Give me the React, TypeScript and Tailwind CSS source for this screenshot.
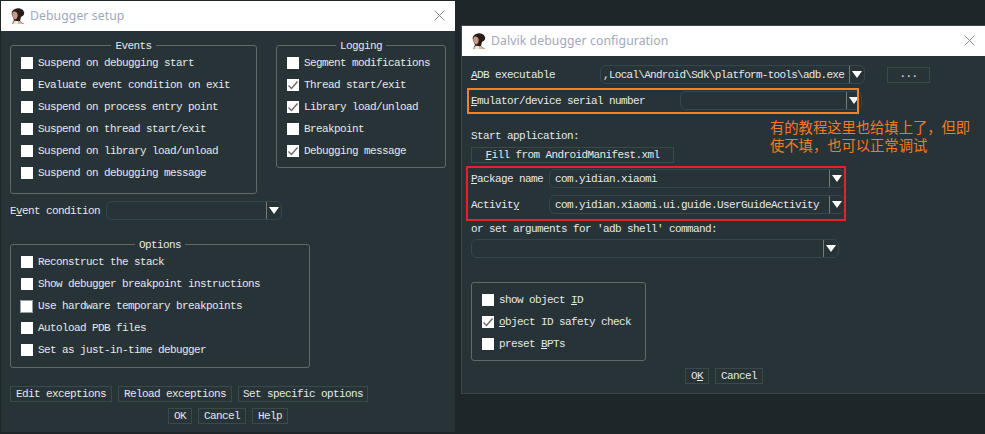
import type { ReactNode } from "react";

function Face() {
  return (
    <svg width="17" height="17" viewBox="0 0 17 17" className="shrink-0">
      <path d="M6 1 C9 -0.5 14 0.5 15 4 C16 7 13 8 12 9 L11 13 L15 16 L3 16 L5 12 L3 7 C2 4 3.5 2 6 1 Z" fill="#2a1c18" />
      <path d="M4 4 C6 3 8 4 8.5 6 C9 8 8 11 6.5 11.5 C5 11.5 3.5 9 3.3 7 C3.2 5.5 3.4 4.5 4 4 Z" fill="#c99a85" />
      <path d="M3 16 L5.5 12.5 L8 13.5 L11 13 L14.5 16 Z" fill="#d8b8a6" />
      <path d="M6 13 L9 13 L9 16 L5 16 Z" fill="#f2e6de" />
    </svg>
  );
}

function Check({ label, checked, focus }: { label: ReactNode; checked?: boolean; focus?: boolean }) {
  return (
    <div className="flex h-[22px] items-center gap-[5px]">
      <span
        className={`flex items-center justify-center bg-white ${
          focus ? "ml-[-1px] h-[13px] w-[13px] border border-[#9aa0a2]" : "h-[12px] w-[12px]"
        }`}
      >
        {checked && (
          <svg width="12" height="12" viewBox="0 0 12 12">
            <path d="M1.5 6.5 L4.5 9.5 L10.5 2.5" fill="none" stroke="#6a6a6a" strokeWidth="1.4" />
          </svg>
        )}
      </span>
      <span>{label}</span>
    </div>
  );
}

function Combo({ width, sep, text, className = "" }: { width: string; sep: string; text?: string; className?: string }) {
  return (
    <div className={`flex h-[19px] items-center overflow-hidden rounded-[6px] border border-[#36474b] ${width} ${className}`}>
      <div className={`h-full overflow-hidden whitespace-pre leading-[19px] ${sep}`}>{text}</div>
      <div className="flex h-full flex-1 items-center justify-center border-l border-[#737c7f]">
        <svg width="10" height="7" viewBox="0 0 10 7">
          <path d="M0 0 H10 L5 7 Z" fill="#ffffff" />
        </svg>
      </div>
    </div>
  );
}

function Btn({ children, width }: { children: ReactNode; width: string }) {
  return (
    <div className={`flex h-[16px] items-center justify-center border border-[#3a4a4b] leading-none ${width}`}>{children}</div>
  );
}

function Group({ title, size, children }: { title?: string; size: string; children: ReactNode }) {
  return (
    <div className={`relative rounded-[3px] border border-[#62696c] pl-[10px] pt-[6px] ${size}`}>
      {title && (
        <div className="absolute left-0 right-0 top-[-6px] flex justify-center leading-[12px]">
          <span className="bg-[#283338] px-[4px]">{title}</span>
        </div>
      )}
      {children}
    </div>
  );
}

function TitleBar({ title }: { title: string }) {
  return (
    <div className="flex h-[30px] items-center bg-white pl-[8px] pr-[10px] font-['Noto_Sans',sans-serif] text-[12.2px] tracking-[0.1px] text-[#a0a8ba]">
      <Face />
      <span className="ml-[4px] flex-1">{title}</span>
      <svg width="11" height="11" viewBox="0 0 11 11" className="mb-[2px]">
        <path d="M0.5 0.5 L10.5 10.5 M10.5 0.5 L0.5 10.5" stroke="#8a8a8a" strokeWidth="1" />
      </svg>
    </div>
  );
}

export default function App() {
  const mono = "font-['Liberation_Mono',monospace] text-[11px] tracking-[-0.6px] text-[#e4e9e9]";
  return (
    <div className="relative h-[434px] w-[985px] overflow-hidden bg-[#1e2629]">
      {/* left window */}
      <div className={`absolute left-[1px] top-[1px] h-[431px] w-[454px] bg-[#283338] ${mono}`}>
        <TitleBar title="Debugger setup" />
        <div className="pl-[9px]">
          <div className="mt-[14px] flex items-start gap-[19px]">
            <Group title="Events" size="h-[149px] w-[247px]">
              <Check label="Suspend on debugging start" />
              <Check label="Evaluate event condition on exit" />
              <Check label="Suspend on process entry point" />
              <Check label="Suspend on thread start/exit" />
              <Check label="Suspend on library load/unload" />
              <Check label="Suspend on debugging message" />
            </Group>
            <Group title="Logging" size="h-[123px] w-[170px]">
              <Check label="Segment modifications" />
              <Check label="Thread start/exit" checked />
              <Check label="Library load/unload" checked />
              <Check label="Breakpoint" />
              <Check label="Debugging message" checked />
            </Group>
          </div>
          <div className="mt-[7px] flex items-center">
            <span className="w-[96px] pt-[2px]">
              E<u>v</u>ent condition
            </span>
            <Combo width="w-[176px]" sep="w-[159px]" />
          </div>
          <div className="mt-[24px]">
            <Group title="Options" size="h-[124px] w-[300px]">
              <Check label="Reconstruct the stack" />
              <Check label="Show debugger breakpoint instructions" />
              <Check label="Use hardware temporary breakpoints" focus />
              <Check label="Autoload PDB files" />
              <Check label="Set as just-in-time debugger" />
            </Group>
          </div>
          <div className="mt-[18px] flex gap-[6px]">
            <Btn width="w-[102px]">Edit exceptions</Btn>
            <Btn width="w-[114px]">Reload exceptions</Btn>
            <Btn width="w-[130px]">Set specific options</Btn>
          </div>
          <div className="mt-[6px] flex gap-[6px] pl-[158px]">
            <Btn width="w-[24px]">OK</Btn>
            <Btn width="w-[48px]">Cancel</Btn>
            <Btn width="w-[36px]">Help</Btn>
          </div>
        </div>
      </div>

      {/* right window */}
      <div className={`absolute left-[461px] top-[25px] h-[369px] w-[524px] border-b border-l border-t border-[#3a4a4b] bg-[#283338] ${mono}`}>
        <TitleBar title="Dalvik debugger configuration" />
        <div className="pl-[9px]">
          <div className="mt-[9px] flex items-center">
            <span className="w-[129px] pt-[2px]">
              <u>A</u>DB executable
            </span>
            <Combo
              width="w-[265px]"
              sep="w-[248px] pl-[2px] tracking-[-0.72px]"
              text=",Local\Android\Sdk\platform-tools\adb.exe"
            />
            <div className="ml-[22px]">
              <Btn width="w-[43px]">...</Btn>
            </div>
          </div>

          <div className="relative mt-[7px] flex items-center">
            <span className="w-[209px] pt-[2px]">
              <u>E</u>mulator/device serial number
            </span>
            <Combo width="w-[182px]" sep="w-[165px]" />
            {/* annotations */}
            <div className="absolute left-[-4px] top-[-3px] h-[26px] w-[392px] border-2 border-[#f58220]" />
            <div className="absolute left-[299px] top-[27px] font-['Noto_Sans_CJK_SC',sans-serif] text-[14.3px] leading-[18px] tracking-normal text-[#f47a20]">
              有的教程这里也给填上了，但即
              <br />
              使不填，也可以正常调试
            </div>
          </div>

          <div className="mt-[17px] h-[16px] w-fit leading-[18px]">Start application:</div>
          <div className="mt-[4px]">
            <Btn width="w-[203px]">
              <span>
                <u>F</u>ill from AndroidManifest.xml
              </span>
            </Btn>
          </div>

          <div className="relative mt-[6px]">
            <div className="flex items-center">
              <span className="w-[78px] pt-[2px]">
                <u>P</u>ackage name
              </span>
              <Combo width="w-[296px]" sep="w-[279px] pl-[5px]" text="com.yidian.xiaomi" />
            </div>
            <div className="mt-[7px] flex items-center">
              <span className="w-[78px] pt-[2px]">
                Activit<u>y</u>
              </span>
              <Combo width="w-[296px]" sep="w-[279px] pl-[5px]" text="com.yidian.xiaomi.ui.guide.UserGuideActivity" />
            </div>
            <div className="absolute left-[-5px] top-[-3px] h-[55px] w-[380px] border-2 border-[#e8202a]" />
          </div>

          <div className="mt-[6px] h-[16px] leading-[18px]">or set arguments for 'adb shell' command:</div>
          <Combo width="w-[368px]" sep="w-[351px]" className="mt-[3px]" />

          <div className="mt-[24px]">
            <Group size="h-[79px] w-[175px]">
              <Check label={<>show object <u>I</u>D</>} />
              <Check label={<><u>o</u>bject ID safety check</>} checked />
              <Check label={<>preset <u>B</u>PTs</>} />
            </Group>
          </div>

          <div className="mt-[7px] flex gap-[6px] pl-[214px]">
            <Btn width="w-[24px]">
              <span>
                O<u>K</u>
              </span>
            </Btn>
            <Btn width="w-[48px]">Cancel</Btn>
          </div>
        </div>
      </div>
    </div>
  );
}
